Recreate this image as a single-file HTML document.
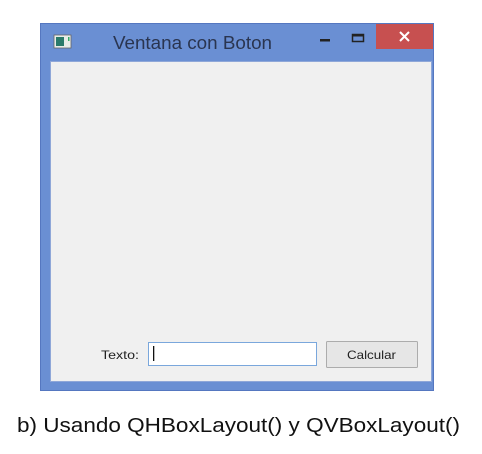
<!DOCTYPE html>
<html><head><meta charset="utf-8"><style>
html,body{margin:0;padding:0;background:#fff;width:482px;height:454px;overflow:hidden}
</style></head><body>
<svg width="482" height="454" xmlns="http://www.w3.org/2000/svg" font-family="Liberation Sans, sans-serif">
<rect x="0" y="0" width="482" height="454" fill="#fff"/>
<rect x="40.5" y="23.5" width="393" height="367" fill="#6a8fd3" stroke="#5577c0"/>
<rect x="50.5" y="61.5" width="381" height="320" fill="#f0f0f0" stroke="#8fa7d8"/>
<rect x="376" y="24" width="57" height="25" fill="#c75050"/>
<path d="M400 32 L409 41 M409 32 L400 41" stroke="#fff" stroke-width="2"/>
<rect x="320" y="39" width="10" height="2.5" fill="#222"/>
<rect x="352.5" y="34.5" width="11" height="7" fill="none" stroke="#222" stroke-width="1.5"/>
<rect x="352" y="34" width="12" height="2.5" fill="#222"/>
<rect x="54" y="35" width="17" height="13" fill="#e8ece8" stroke="#666" stroke-width="0.8"/>
<rect x="56" y="37" width="8" height="9" fill="#2a7a6a"/>
<rect x="68" y="37" width="1.5" height="4" fill="#3a6"/>
<text x="113" y="49" font-size="18" fill="#2a3550" textLength="159" lengthAdjust="spacingAndGlyphs">Ventana con Boton</text>
<text x="101" y="359" font-size="12" fill="#222" textLength="38" lengthAdjust="spacingAndGlyphs">Texto:</text>
<rect x="148.5" y="342.5" width="168" height="23" fill="#fff" stroke="#7aa7dc"/>
<rect x="153" y="346" width="1.3" height="15" fill="#111"/>
<rect x="326.5" y="341.5" width="91" height="26" rx="1" fill="#e6e6e6" stroke="#acacac"/>
<text x="347" y="359" font-size="12" fill="#222" textLength="49" lengthAdjust="spacingAndGlyphs">Calcular</text>
<text x="17" y="432" font-size="20" fill="#111" textLength="443" lengthAdjust="spacingAndGlyphs">b) Usando QHBoxLayout() y QVBoxLayout()</text>
</svg>
</body></html>
